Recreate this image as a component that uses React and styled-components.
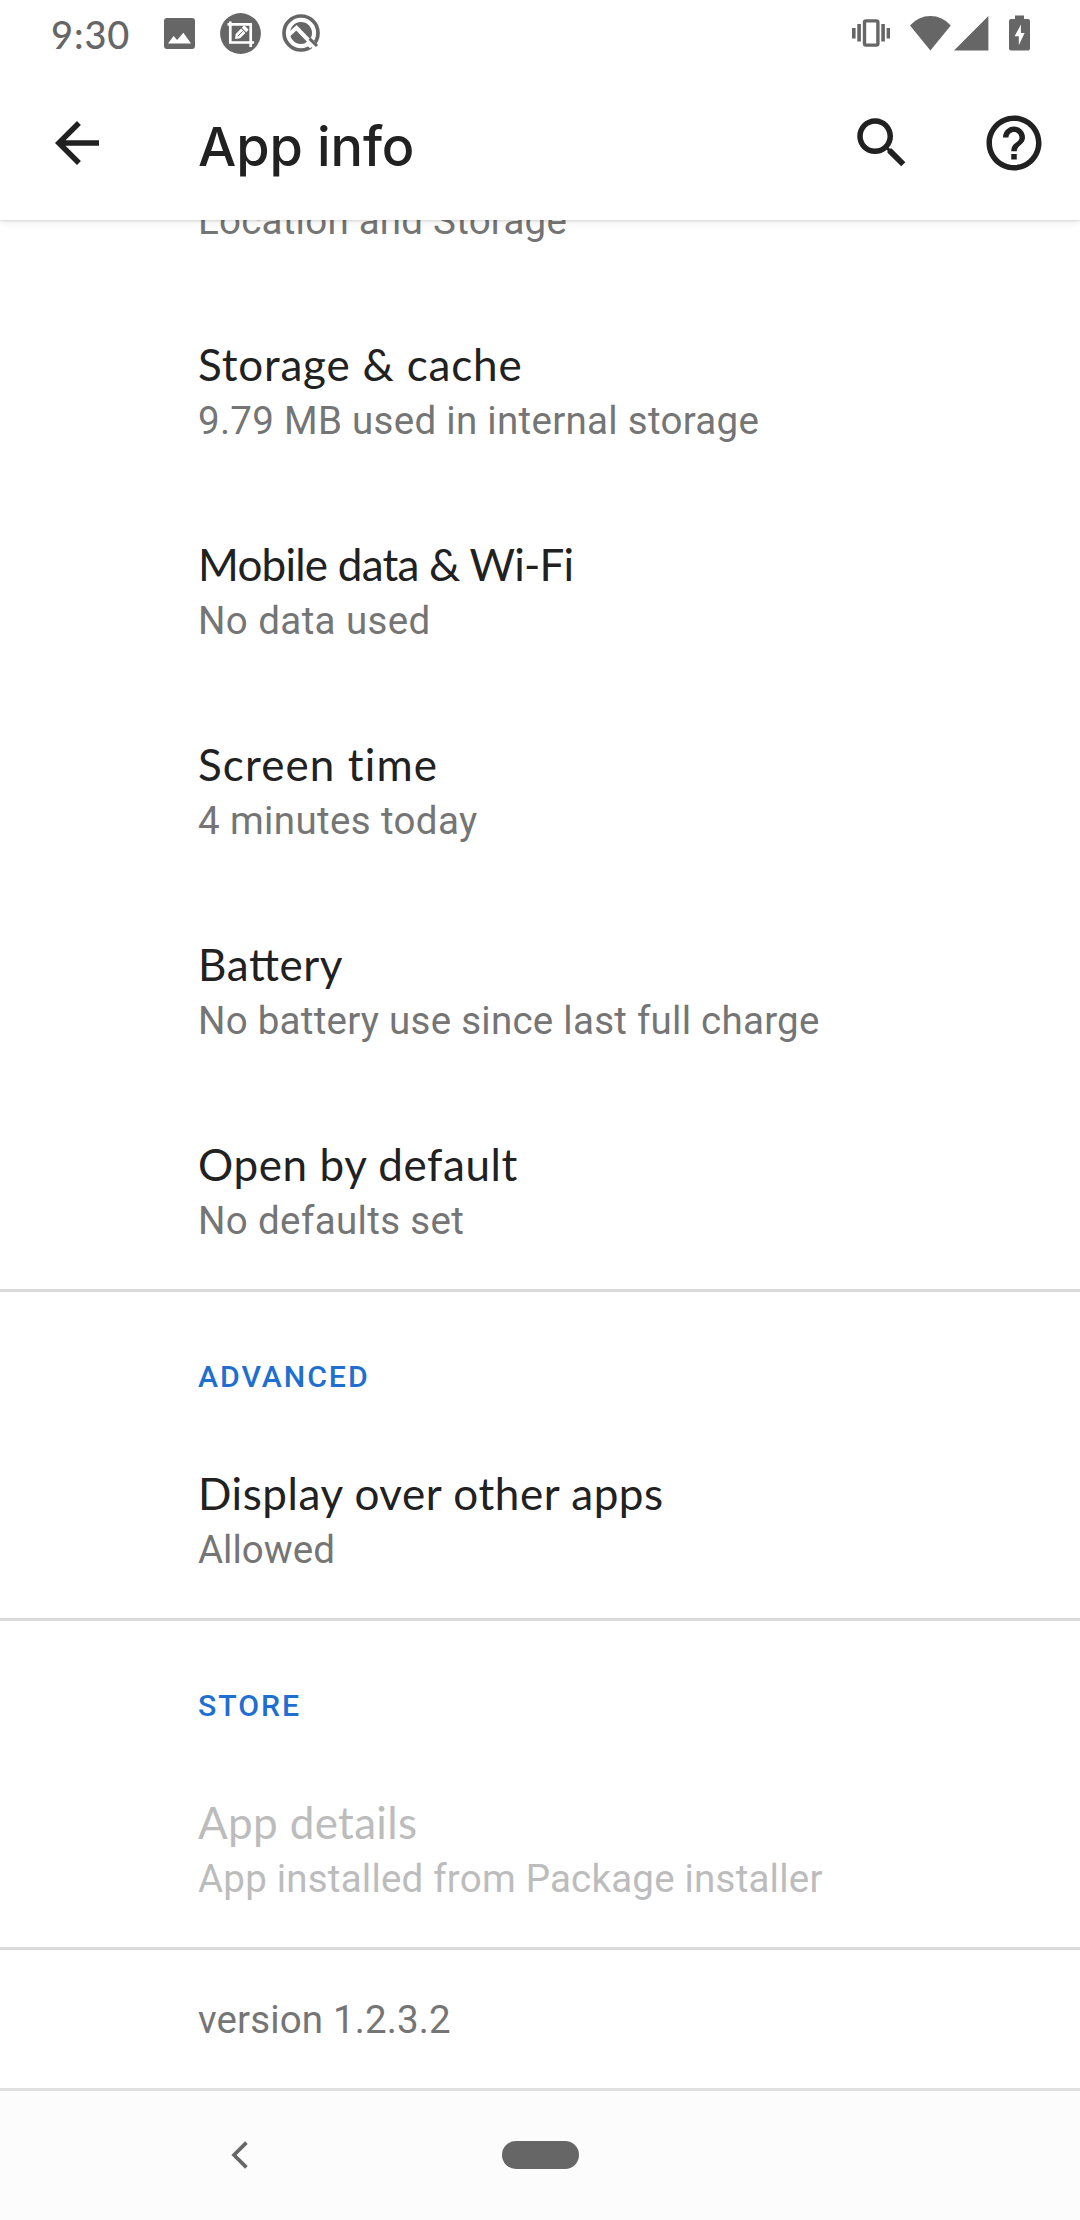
import React from 'react';
import styled, { createGlobalStyle } from 'styled-components';

const GlobalStyle = createGlobalStyle`
  * {
    box-sizing: border-box;
  }

  body {
    margin: 0;
    background-color: #fff;
    font-family: Roboto, sans-serif;
  }
`;

const Screen = styled.div`
  display: flex;
  flex-direction: column;
  width: 1080px;
  height: 2220px;
  overflow: hidden;
  background-color: #fff;
`;

const StatusBar = styled.div`
  position: relative;
  z-index: 2;
  display: flex;
  justify-content: space-between;
  flex: none;
  height: 66px;
  padding: 0 50px 0 51px;
  background-color: #fff;
  color: #666;
`;

const StatusGroup = styled.div`
  display: flex;
  align-items: center;
  height: 66px;
`;

const Clock = styled.span`
  width: 113px;
  margin-top: 2px;
  font: 500 38px/44px Lato, sans-serif;
  letter-spacing: 0.9px;
`;

const Icon = styled.svg`
  display: block;
  flex: none;
  width: ${(p) => p.$w}px;
  height: ${(p) => p.$h}px;
  margin-left: ${(p) => p.$gap || 0}px;
  fill: currentColor;
`;

const AppBar = styled.header`
  position: relative;
  z-index: 1;
  display: flex;
  align-items: center;
  flex: none;
  height: 154px;
  padding: 0 33px 0 44px;
  background-color: #fff;
  box-shadow: 0 1px 2px rgba(0, 0, 0, 0.12), 0 3px 9px rgba(0, 0, 0, 0.07);
  color: #212121;
`;

const Title = styled.h1`
  flex: 1;
  margin: 8px 0 0 88px;
  font: 500 54px/64px Inter, sans-serif;
  letter-spacing: -0.1px;
`;

/* scrolled to the end, so the list hangs from the bottom edge */
const Content = styled.main`
  display: flex;
  flex-direction: column;
  justify-content: flex-end;
  flex: none;
  height: 1868px;
  overflow: hidden;
`;

const Section = styled.section`
  flex: none;
  border-bottom: ${(p) => (p.$last ? 'none' : '3px solid #dadada')};
`;

const SectionTitle = styled.h2`
  height: 126px;
  margin: 0;
  padding: 67px 0 0 198px;
  color: #1f6fd0;
  font: 500 30.25px/36px Roboto, sans-serif;
  letter-spacing: 1.95px;
`;

const Row = styled.div`
  display: flex;
  flex-direction: column;
  justify-content: flex-end;
  height: 200px;
  padding: 0 0 43px 198px;
`;

/* letter-spacing turns ligatures off, $joined brings the tt back */
const RowTitle = styled.div`
  color: ${(p) => (p.$disabled ? '#bcbcbc' : '#212121')};
  font: 44px/54px Lato, sans-serif;
  font-feature-settings: ${(p) => (p.$joined ? "'liga' 1" : 'normal')};
  letter-spacing: ${(p) => p.$spacing}px;
  white-space: nowrap;
`;

const RowSummary = styled.div`
  margin-top: 5px;
  color: ${(p) => (p.$disabled ? '#bcbcbc' : '#757575')};
  font: 38.5px/50px Roboto, sans-serif;
  letter-spacing: ${(p) => p.$spacing}px;
  white-space: nowrap;
`;

const Version = styled.div`
  height: 138px;
  padding: 45px 0 0 198px;
  color: #757575;
  font: 38.5px/50px Roboto, sans-serif;
  letter-spacing: 0.13px;
`;

const NavBar = styled.nav`
  display: flex;
  align-items: center;
  flex: none;
  height: 132px;
  padding: 0 0 2px 231px;
  border-top: 3px solid #e0e0e0;
  background-color: #fcfcfc;
  color: #666;
`;

const HomePill = styled.div`
  width: 77px;
  height: 28px;
  margin-left: 254px;
  border-radius: 14px;
  background-color: #666;
`;

const appItems = [
  { summary: 'Location and Storage', summarySpacing: 0.24 },
  { title: 'Storage & cache', spacing: 0.81, summary: '9.79 MB used in internal storage', summarySpacing: 0.29 },
  { title: 'Mobile data & Wi-Fi', spacing: -0.77, summary: 'No data used', summarySpacing: 0.4 },
  { title: 'Screen time', spacing: 1.1, summary: '4 minutes today', summarySpacing: 0.37 },
  { title: 'Battery', spacing: 0.6, joined: true, summary: 'No battery use since last full charge', summarySpacing: 0.255 },
  { title: 'Open by default', spacing: 0.6, summary: 'No defaults set', summarySpacing: 0.36 },
];

const Item = ({ title, spacing, joined, summary, summarySpacing = 0, disabled }) => (
  <Row>
    {title && (
      <RowTitle $spacing={spacing} $joined={joined} $disabled={disabled}>
        {title}
      </RowTitle>
    )}
    <RowSummary $spacing={summarySpacing} $disabled={disabled}>{summary}</RowSummary>
  </Row>
);

const App = () => {
  return (
    <Screen>
      <GlobalStyle />
      <StatusBar>
        <StatusGroup>
          <Clock>9:30</Clock>
          <Icon $w={31} $h={31} viewBox="0 0 31 31">
            <path
              fillRule="evenodd"
              d="M3 0h25a3 3 0 0 1 3 3v25a3 3 0 0 1-3 3H3a3 3 0 0 1-3-3V3a3 3 0 0 1 3-3zM4 25.5h23l-7.6-10.7-6.3 7.1-3.5-4z"
            />
          </Icon>
          <Icon $w={41} $h={41} $gap={25} viewBox="0 0 41 41">
            <circle cx="20.5" cy="20.5" r="20.4" />
            <path d="M7.5 11.3H30.7V34M10.3 8.5V29.5H34" fill="none" stroke="#fff" strokeWidth="2.7" />
            <g transform="rotate(-45 20.5 20.5)">
              <path d="M12.8 20.5l4-3.1h7.6v6.2h-7.6zM25.4 17.4h2.6a1 1 0 0 1 1 1v4.2a1 1 0 0 1-1 1h-2.6z" fill="#fff" />
              <path d="M16.6 20.5h7" stroke="#666" strokeWidth="0.9" />
            </g>
          </Icon>
          <Icon $w={38} $h={38} $gap={21} viewBox="0 0 38 38">
            <circle cx="19" cy="19" r="17" fill="none" stroke="currentColor" strokeWidth="3.7" />
            <circle cx="19" cy="19" r="11" />
            <path d="M6.5 21L14.5 13.8L31 31" fill="none" stroke="#fff" strokeWidth="4" />
            <path d="M26 26.5L31 31.6" stroke="#fff" strokeWidth="8" />
            <path d="M27.5 27.5L34.8 34.8" stroke="#fff" strokeWidth="5" />
            <path d="M27.6 24.6L35 32" stroke="currentColor" strokeWidth="3" />
          </Icon>
        </StatusGroup>
        <StatusGroup>
          <Icon $w={38} $h={28} viewBox="0 0 38 28">
            <path d="M0 9h3.6v10.5H0zM5.3 5h3.6v17.5H5.3zM29.3 5h3.6v17.5h-3.6zM34.6 9h3.4v10.5h-3.4z" />
            <rect x="12.5" y="1.9" width="13.4" height="24.2" rx="1.6" fill="none" stroke="currentColor" strokeWidth="3.4" />
          </Icon>
          <Icon $w={41} $h={35} $gap={20} viewBox="0 0 41 35">
            <path d="M0 9.4A27 27 0 0 1 40.8 9.4L20.4 34.4z" />
          </Icon>
          <Icon $w={35} $h={35} $gap={3.5} viewBox="0 0 35 35">
            <path d="M0 34.6L34.4 0v34.6z" />
          </Icon>
          <Icon $w={21} $h={36} $gap={20} viewBox="0 0 21 36">
            <path
              fillRule="evenodd"
              d="M6 .4h9v3.7h4a2 2 0 0 1 2 2v27.4a2 2 0 0 1-2 2H2a2 2 0 0 1-2-2V6.1a2 2 0 0 1 2-2h4zM11.9 9.5L5.6 21.3h4.2v9L15.6 18h-3.7z"
            />
          </Icon>
        </StatusGroup>
      </StatusBar>

      <AppBar>
        <Icon $w={66} $h={66} viewBox="0 0 24 24">
          <path d="M20 11H7.83l5.59-5.59L12 4l-8 8 8 8 1.41-1.41L7.83 13H20v-2z" />
        </Icon>
        <Title>App info</Title>
        <Icon $w={66} $h={66} viewBox="0 0 24 24">
          <path d="M15.5 14h-.79l-.28-.27C15.41 12.59 16 11.11 16 9.5 16 5.91 13.09 3 9.5 3S3 5.91 3 9.5 5.91 16 9.5 16c1.61 0 3.09-.59 4.23-1.57l.27.28v.79l5 4.99L20.49 19l-4.99-5zm-6 0C7.01 14 5 11.99 5 9.5S7.01 5 9.5 5 14 7.01 14 9.5 11.99 14 9.5 14z" />
        </Icon>
        <Icon $w={66} $h={66} $gap={66} viewBox="0 0 24 24">
          <path d="M11 18h2v-2h-2v2zm1-16C6.48 2 2 6.48 2 12s4.48 10 10 10 10-4.48 10-10S17.52 2 12 2zm0 18c-4.41 0-8-3.59-8-8s3.59-8 8-8 8 3.59 8 8-3.59 8-8 8zm0-14c-2.21 0-4 1.79-4 4h2c0-1.1.9-2 2-2s2 .9 2 2c0 2-3 1.75-3 5h2c0-2.25 3-2.5 3-5 0-2.21-1.79-4-4-4z" />
        </Icon>
      </AppBar>

      <Content>
        <Section>
          {appItems.map((item) => (
            <Item key={item.summary} {...item} />
          ))}
        </Section>
        <Section>
          <SectionTitle>ADVANCED</SectionTitle>
          <Item title="Display over other apps" spacing={0.57} summary="Allowed" />
        </Section>
        <Section>
          <SectionTitle>STORE</SectionTitle>
          <Item
            title="App details"
            spacing={0.34}
            summary="App installed from Package installer"
            summarySpacing={0.21}
            disabled
          />
        </Section>
        <Section $last>
          <Version>version 1.2.3.2</Version>
        </Section>
      </Content>

      <NavBar>
        <Icon $w={17} $h={28} viewBox="0 0 17 28">
          <path d="M15.4 1.6L3 14L15.4 26.4" fill="none" stroke="currentColor" strokeWidth="3.7" />
        </Icon>
        <HomePill />
      </NavBar>
    </Screen>
  );
};

export default App;
